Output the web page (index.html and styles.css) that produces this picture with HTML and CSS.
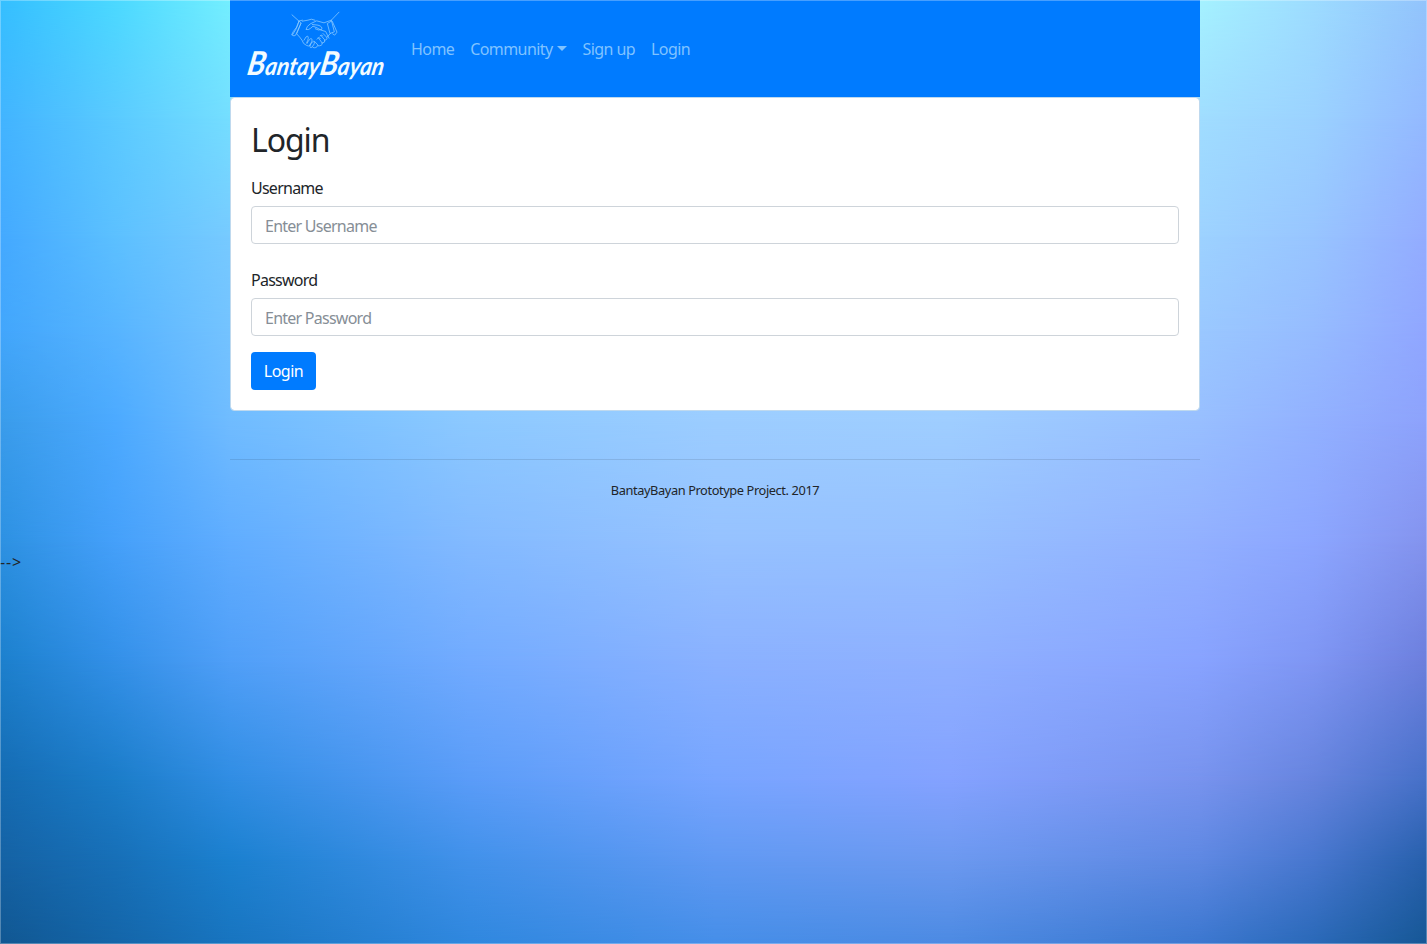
FILE: index.html
```html
<!DOCTYPE html>
<html lang="en">
<head>
<meta charset="utf-8">
<title>BantayBayan</title>
<link rel="stylesheet" href="styles.css">
</head>
<body>
<div class="backdrop" aria-hidden="true">
  <div class="band band-0"></div><div class="band band-1"></div><div class="band band-2"></div><div class="band band-3"></div><div class="band band-4"></div>
  <div class="band band-5"></div><div class="band band-6"></div><div class="band band-7"></div><div class="band band-8"></div><div class="band band-9"></div>
</div>
<div class="container">
  <nav class="navbar">
    <a class="brand" href="#">
      <svg width="160" height="97" viewBox="0 0 160 97">
        <g transform="translate(42 8.5) scale(.33333)" class="hands">
          <path d="M21 19l21 19 10-3M42 38q-5 20-17 31l-5 10q8 6 12 1l16-36-6-6M42 38l-9 24-10 16M52 38l17-3q9-6 21 0M48 44l-13 32q10 10 16 19 3 12 14 16 6 4 10-1M162 11l-23 24-22 8-22-6-19 9q-11 7-13 17 7 2 13-3l8-7 12 5q11 8 26 11l10 20M139 35l9 35-13 5-8-30 12-7M142 39l14 32-7 9-6-4M82 48l17 2q15 4 11 13-10 4-19-2M57 95q7-14 11-12 5 4-3 20M66 105q9-18 14-14 4 5-5 18M75 111q8-16 13-12 3 6-7 17-8 4-6-5M84 117q10 4 15-7l-10-11M99 112q13 1 13-8l-12-16M111 104q12-2 8-10l-11-13M119 95q10-1 6-9l-11-11M126 86l10-11M96 92q6-9 10-2M105 82q6-6 8 0"/>
        </g>
        <text class="wordmark" transform="translate(3 74.5) skewX(-10)" textLength="137" lengthAdjust="spacingAndGlyphs"><tspan class="initial">B</tspan>antay<tspan class="initial">B</tspan>ayan</text>
      </svg>
    </a>
    <a class="nav-link" href="#">Home</a>
    <a class="nav-link dropdown" href="#">Community</a>
    <a class="nav-link" href="#">Sign up</a>
    <a class="nav-link" href="#">Login</a>
  </nav>
  <main class="card">
    <h2 class="title">Login</h2>
    <form>
      <div class="group">
        <label class="label" for="user">Username</label>
        <input class="input" id="user" type="text" placeholder="Enter Username">
      </div>
      <div class="group password">
        <label class="label" for="pass">Password</label>
        <input class="input" id="pass" type="password" placeholder="Enter Password">
      </div>
      <button class="button" type="button">Login</button>
    </form>
  </main>
  <footer class="footer">BantayBayan Prototype Project. 2017</footer>
</div>
<div class="stray">--&gt;</div>
</body>
</html>
```
FILE: styles.css
```css
* { box-sizing: border-box; }
body { margin: 0; height: 944px; overflow: hidden; color: #212529; font: 16px/24px "Noto Sans", sans-serif; letter-spacing: -0.75px; }
.backdrop { position: absolute; inset: 0; z-index: -1; overflow: hidden; }
body::after { content: ""; position: absolute; inset: 0; border: 1px solid rgba(255,255,255,.28); pointer-events: none; }

/* Each band fades in over the one above it, forming a smooth two-way gradient. */
.band { position: absolute; left: 0; right: 0; top: var(--top); bottom: 0;
  background: linear-gradient(90deg, var(--a) 0, var(--b) 115px, var(--c) 230px, var(--d) 470px, var(--e) 715px, var(--f) 950px, var(--g) 1200px, var(--h) 1313px, var(--i) 1427px);
  -webkit-mask-image: linear-gradient(transparent, #000 var(--fade)); mask-image: linear-gradient(transparent, #000 var(--fade)); }
.band-0 { --top: 0; --a:#35bfff; --b:#4bd9ff; --c:#74efff; --d:#8cf0ff; --e:#9cf2ff; --f:#a2f2ff; --g:#a5f2ff; --h:#9ddcff; --i:#92c4fc; -webkit-mask-image: none; mask-image: none; }
.band-1 { --top: 0; --fade: 118px; --a:#42b4ff; --b:#5acaff; --c:#75deff; --d:#8cdfff; --e:#9ce0ff; --f:#a0e0ff; --g:#a0ddff; --h:#9bd2ff; --i:#93b9ff; }
.band-2 { --top: 118px; --fade: 118px; --a:#44a9ff; --b:#5cc0ff; --c:#77caff; --d:#8cd0ff; --e:#9cd8ff; --f:#a0d8ff; --g:#9dd2ff; --h:#98c5ff; --i:#93acff; }
.band-3 { --top: 236px; --fade: 94px; --a:#42a6fc; --b:#57b4ff; --c:#74c3ff; --d:#8cccff; --e:#9cd2ff; --f:#a0d2ff; --g:#9ac8ff; --h:#96bcff; --i:#90a6ff; }
.band-4 { --top: 330px; --fade: 90px; --a:#3a9ceb; --b:#4caaff; --c:#70bcff; --d:#8cc9ff; --e:#9ccdff; --f:#9fceff; --g:#98bfff; --h:#92b1ff; --i:#8da2fc; }
.band-5 { --top: 420px; --fade: 120px; --a:#2d91e2; --b:#45a0fa; --c:#60adff; --d:#83baff; --e:#96c2ff; --f:#96c0ff; --g:#92b0ff; --h:#8ca6ff; --i:#8493ee; }
.band-6 { --top: 540px; --fade: 120px; --a:#1c80cd; --b:#3390e8; --c:#509ff8; --d:#72abff; --e:#8ab1ff; --f:#8fb0ff; --g:#88a3ff; --h:#7f96f4; --i:#6c7fdd; }
.band-7 { --top: 660px; --fade: 120px; --a:#156bb2; --b:#1b7cc8; --c:#308de3; --d:#5a9cf8; --e:#77a5ff; --f:#84a2ff; --g:#7793ee; --h:#6684de; --i:#4670c8; }
.band-8 { --top: 780px; --fade: 80px; --a:#1562a4; --b:#176fb7; --c:#1b80cf; --d:#4191ea; --e:#6099f3; --f:#6c99f0; --g:#5e88e2; --h:#4877cf; --i:#2760ac; }
.band-9 { --top: 860px; --fade: 84px; --a:#115792; --b:#1465a8; --c:#1874bf; --d:#2f87de; --e:#458ee8; --f:#4c8ae2; --g:#3b77cf; --h:#2a69b8; --i:#165795; }

.container { width: 970px; margin-left: 230px; }
.navbar { height: 97px; background: #007bff; display: flex; align-items: center; padding: 0 13px; letter-spacing: -.58px; }
.brand, .brand svg { width: 160px; height: 97px; display: block; }
.hands { fill: none; stroke: #8ccbff; stroke-width: 2.3; stroke-linecap: round; stroke-linejoin: round; }
.wordmark { font: italic 700 25px "Lato", sans-serif; letter-spacing: 0; fill: #f2fbff; }
.initial { font-size: 33px; }
.nav-link { color: #80c3ff; text-decoration: none; padding: 0 8px; white-space: nowrap; }
.dropdown::after { content: ""; display: inline-block; margin-left: 4px; vertical-align: 4px; border: 5px solid transparent; border-top-color: currentColor; border-bottom: 0; }
.card { height: 314px; background: #fff; background-clip: padding-box; border: 1px solid #bfd9ee; border-radius: 4px; padding: 20px; }
.title { margin: 3px 0 17px; font-size: 32px; line-height: 38px; font-weight: 400; letter-spacing: -1.1px; }
.group { display: flex; flex-direction: column; gap: 6px; margin-bottom: 24px; }
.password { margin-bottom: 16px; }
.label { display: block; line-height: 24px; }
.input { width: 100%; height: 38px; padding: 2px 13px 0; border: 1px solid #ced4da; border-radius: 4px; font: inherit; letter-spacing: inherit; background: #fff; }
.input::placeholder { color: #868e96; opacity: 1; }
.button { display: block; height: 38px; width: 65px; padding: 0; border: 0; border-radius: 4px; background: #007bff; color: #fff; font: inherit; letter-spacing: -.5px; }
.footer { margin-top: 48px; border-top: 1px solid rgba(0,0,0,.1); padding-top: 18px; text-align: center; font-size: 12.8px; letter-spacing: -.4px; }
.stray { margin-top: 48px; letter-spacing: .8px; }
```
